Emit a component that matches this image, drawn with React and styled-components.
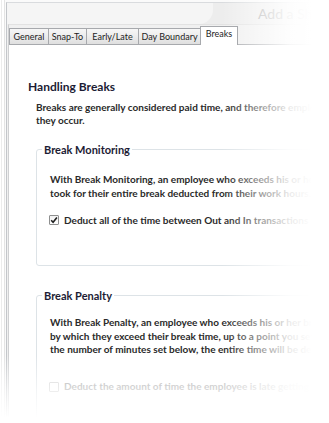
import React from 'react';
import styled, { createGlobalStyle, css } from 'styled-components';

const GlobalStyle = createGlobalStyle`
  html, body {
    margin: 0;
    padding: 0;
    background: #fff;
    overflow: hidden;
  }
  body {
    font-family: 'Lato', 'Liberation Sans', sans-serif;
  }
`;

const Stage = styled.div`
  position: relative;
  width: 329px;
  height: 423px;
  overflow: hidden;
  box-sizing: border-box;
  padding: 2px 0 0 6px;
  background: linear-gradient(
    to right,
    #fff 0, #fff 1px, #ececec 1px, #ececec 2px, #fff 2px,
    #fff 4px, #e4e4e4 4px, #e4e4e4 5px, #fafafa 5px
  );
`;

const Window = styled.div`
  width: 480px;
  height: 460px;
  background: #f0f0f0;
  border-left: 1px solid #c3c6ca;
  border-top: 1px solid #d9dbde;
  display: flex;
  flex-direction: column;
`;

const TitleBar = styled.div`
  position: relative;
  height: 21px;
  display: flex;
  align-items: center;
  padding-left: 251px;
  background: #ededed;

  &::before {
    content: '';
    position: absolute;
    left: 0;
    top: 0;
    width: 206px;
    height: 21px;
    background: #f5f5f5;
    border-bottom-right-radius: 14px;
  }
`;

const Title = styled.span`
  position: relative;
  font-size: 14px;
  color: #a9a9a9;
  white-space: nowrap;
`;

const TabControl = styled.div`
  margin-left: 1px;
  flex: 1;
  display: flex;
  flex-direction: column;
  border-left: 1px solid #cfd0d2;
  border-top: 1px solid #e2e2e2;
`;

const TabStrip = styled.div`
  display: flex;
  align-items: flex-end;
  padding-top: 3px;
  height: 16px;
`;

const Tab = styled.div`
  position: relative;
  box-sizing: border-box;
  width: ${(p) => p.$w + 1}px;
  height: 16px;
  margin-right: -1px;
  border: 1px solid #a7a9ad;
  border-bottom: none;
  background: linear-gradient(#f7f7f7, #ececec 50%, #dfdfdf);
  font-size: 9px;
  line-height: 15px;
  text-align: center;
  color: #1e1e1e;
  white-space: nowrap;

  ${(p) =>
    p.$active &&
    css`
      z-index: 1;
      height: 19px;
      margin-bottom: -1px;
      padding-bottom: 3px;
      line-height: 14px;
      background: #fff;
    `}
`;

const Panel = styled.div`
  flex: 1;
  background: #fff;
  border-top: 1px solid #a7a9ad;
  padding: 35px 0 0 19px;
`;

const Heading = styled.div`
  font-size: 12px;
  line-height: 14px;
  font-weight: 700;
  color: #1c1c34;
  white-space: nowrap;
`;

const Text = styled.div`
  font-size: 10px;
  font-weight: 700;
  line-height: ${(p) => p.$lh || 13}px;
  color: ${(p) => (p.$disabled ? '#9c9c9c' : '#2a2a2a')};
  white-space: nowrap;
  margin-top: ${(p) => p.$mt || 0}px;
  margin-left: ${(p) => p.$ml || 0}px;
`;

const GroupBox = styled.div`
  margin: ${(p) => p.$mt}px 0 0 8px;
  padding: 0 0 ${(p) => p.$pb}px 13px;
  border: 1px solid #dde3e7;
  border-radius: 3px;
`;

const GroupTitle = styled.div`
  display: table;
  margin: -7px 0 0 -8px;
  padding: 0 2px;
  background: #fff;
  font-size: 11px;
  line-height: 13px;
  font-weight: 700;
  color: #1c1c34;
  white-space: nowrap;
`;

const CheckRow = styled.div`
  display: flex;
  align-items: center;
  gap: 5px;
  height: 14px;
  margin-top: ${(p) => p.$mt}px;
  margin-left: -1px;
`;

const Box = styled.span`
  box-sizing: border-box;
  width: 10px;
  height: 10px;
  border: 1px solid ${(p) => (p.$disabled ? '#cfcfcf' : '#8e8f8f')};
  border-radius: 1px;
  background: ${(p) => (p.$disabled ? '#fff' : 'linear-gradient(#f2f2f2, #ffffff)')};
  display: flex;
  align-items: center;
  justify-content: center;
`;

const Fade = styled.div`
  position: absolute;
  inset: 0;
  pointer-events: none;
  background:
    linear-gradient(
      to right,
      rgba(255, 255, 255, 0) 222px,
      rgba(255, 255, 255, 0.55) 262px,
      rgba(255, 255, 255, 0.9) 290px,
      #fff 312px
    ),
    linear-gradient(
      to bottom,
      rgba(255, 255, 255, 0) 355px,
      rgba(255, 255, 255, 0.65) 392px,
      #fff 418px
    );
`;

function CheckBox({ checked, disabled }) {
  return (
    <Box $disabled={disabled}>
      {checked && (
        <svg width="8" height="8" viewBox="0 0 8 8">
          <path d="M1.2 4.2 L3.1 6.2 L6.9 1.4" fill="none" stroke="#1e1e1e" strokeWidth="1.6" />
        </svg>
      )}
    </Box>
  );
}

const tabs = [
  { label: 'General', w: 39 },
  { label: 'Snap-To', w: 38 },
  { label: 'Early/Late', w: 52 },
  { label: 'Day Boundary', w: 62 },
  { label: 'Breaks', w: 37 },
];

export default function App() {
  return (
    <>
      <GlobalStyle />
      <Stage>
        <Window>
          <TitleBar>
            <Title>Add a Shift Rule</Title>
          </TitleBar>
          <TabControl>
            <TabStrip>
              {tabs.map((t) => (
                <Tab key={t.label} $w={t.w} $active={t.label === 'Breaks'}>
                  {t.label}
                </Tab>
              ))}
            </TabStrip>
            <Panel>
              <Heading>Handling Breaks</Heading>
              <Text $mt={7} $ml={8}>
                Breaks are generally considered paid time, and therefore employees are
                <br />
                they occur.
              </Text>

              <GroupBox $mt={22} $pb={38}>
                <GroupTitle>Break Monitoring</GroupTitle>
                <Text $mt={16} $lh={14}>
                  With Break Monitoring, an employee who exceeds his or her break time will have
                  <br />
                  took for their entire break deducted from their work hours.
                </Text>
                <CheckRow $mt={13}>
                  <CheckBox checked />
                  <Text>Deduct all of the time between Out and In transactions that exceed</Text>
                </CheckRow>
              </GroupBox>

              <GroupBox $mt={29} $pb={40}>
                <GroupTitle>Break Penalty</GroupTitle>
                <Text $mt={14} $lh={13.5}>
                  With Break Penalty, an employee who exceeds his or her break time has the time
                  <br />
                  by which they exceed their break time, up to a point you set, deducted. Past
                  <br />
                  the number of minutes set below, the entire time will be deducted.
                </Text>
                <CheckRow $mt={23}>
                  <CheckBox disabled />
                  <Text $disabled>Deduct the amount of time the employee is late getting back</Text>
                </CheckRow>
              </GroupBox>
            </Panel>
          </TabControl>
        </Window>
        <Fade />
      </Stage>
    </>
  );
}
